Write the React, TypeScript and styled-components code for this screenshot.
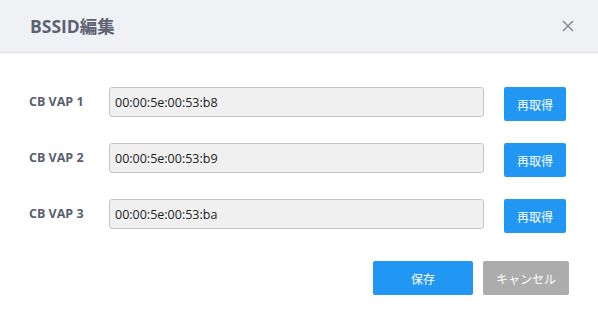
import styled, { createGlobalStyle } from "styled-components";

const GlobalStyle = createGlobalStyle`
  html, body {
    margin: 0;
    padding: 0;
    background: #ffffff;
  }
  body {
    font-family: "Open Sans", "Noto Sans CJK JP", sans-serif;
  }
`;

const rows = [
  { label: "CB VAP 1", value: "00:00:5e:00:53:b8" },
  { label: "CB VAP 2", value: "00:00:5e:00:53:b9" },
  { label: "CB VAP 3", value: "00:00:5e:00:53:ba" },
];

export default function App() {
  return (
    <>
      <GlobalStyle />
      <Dialog>
        {/* ヘッダー */}
        <Header>
          <Title>BSSID編集</Title>
          <CloseButton aria-label="close">
            <svg width="12" height="12" viewBox="0 0 12 12">
              <path d="M1 1 L11 11 M11 1 L1 11" stroke="#8a8f9e" strokeWidth="1.6" fill="none" />
            </svg>
          </CloseButton>
        </Header>

        {/* 本文 */}
        <Body>
          {rows.map((row) => (
            <Row key={row.label}>
              <Label>{row.label}</Label>
              <Input readOnly value={row.value} />
              <SmallButton>再取得</SmallButton>
            </Row>
          ))}
        </Body>

        {/* フッター */}
        <Footer>
          <ActionButton $variant="primary">保存</ActionButton>
          <ActionButton $variant="muted">キャンセル</ActionButton>
        </Footer>
      </Dialog>
    </>
  );
}

const Dialog = styled.div`
  width: 598px;
  height: 315px;
  background: #ffffff;
  display: flex;
  flex-direction: column;
`;

const Header = styled.div`
  height: 53px;
  background: #f0f1f5;
  border-bottom: 1px solid #dfe0e4;
  display: flex;
  align-items: center;
  justify-content: space-between;
  padding: 0 24px 0 30px;
  box-sizing: border-box;
`;

const Title = styled.div`
  font-size: 17.5px;
  font-weight: 700;
  color: #5d6273;
  margin-top: -2px;
`;

const CloseButton = styled.button`
  border: none;
  background: none;
  padding: 0;
  display: flex;
  margin-top: -1px;
  cursor: pointer;
`;

const Body = styled.div`
  padding: 34px 32px 0 29px;
  display: flex;
  flex-direction: column;
  gap: 22px;
`;

const Row = styled.div`
  display: flex;
  align-items: center;
  height: 34px;
`;

const Label = styled.div`
  width: 80px;
  font-size: 12.5px;
  font-weight: 700;
  color: #5a5f6e;
  margin-top: -6px;
`;

const Input = styled.input`
  width: 375px;
  height: 30px;
  box-sizing: border-box;
  border: 1px solid #c4c4c4;
  border-radius: 3px;
  background: #f0f0f0;
  font-family: "Open Sans", sans-serif;
  font-size: 12.5px;
  color: #222;
  padding: 0 5px;
  margin-top: -4px;
  outline: none;
`;

const SmallButton = styled.button`
  margin-left: 20px;
  width: 62px;
  height: 34px;
  border: none;
  border-radius: 2px;
  background: #2196f3;
  color: #ffffff;
  font-family: "Noto Sans CJK JP", sans-serif;
  font-size: 12px;
  padding: 0;
`;

const Footer = styled.div`
  display: flex;
  justify-content: flex-end;
  gap: 10px;
  padding: 0 29px 0 0;
  margin-top: 28px;
`;

const ActionButton = styled.button<{ $variant: "primary" | "muted" }>`
  width: ${(p) => (p.$variant === "primary" ? "100px" : "86px")};
  height: 34px;
  border: none;
  border-radius: 2px;
  background: ${(p) => (p.$variant === "primary" ? "#2196f3" : "#acacac")};
  color: #ffffff;
  font-family: "Noto Sans CJK JP", sans-serif;
  font-size: 12px;
  padding: 0;
`;
